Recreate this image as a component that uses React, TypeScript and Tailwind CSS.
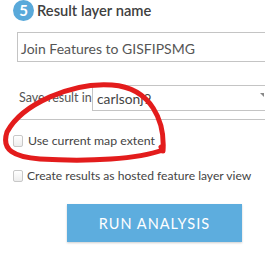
import React from 'react';

const font = { fontFamily: 'Lato, "Open Sans", sans-serif' };

function Checkbox() {
  return (
    <span className="inline-block w-[10px] h-[12px] rounded-[2px] border border-[#c8c8c8] bg-gradient-to-b from-white to-[#ededed] shrink-0" />
  );
}

export default function App() {
  return (
    <div className="relative w-[265px] h-[268px] bg-white overflow-hidden text-[#4c4c4c] whitespace-nowrap" style={font}>
      {/* Step header */}
      <div className="flex items-center h-[22px] mt-[-1px] pl-[13px]">
        <span className="flex items-center justify-center w-[21px] h-[21px] rounded-full bg-[#59a9da] text-white text-[15px] font-bold leading-none">
          5
        </span>
        <span className="ml-[3px] text-[14.7px] font-semibold text-[#404040] leading-none">Result layer name</span>
      </div>

      {/* Layer name input */}
      <div className="ml-[17px] mt-[11px] w-[260px] h-[30px] border border-[#c4c4c4] flex items-center pl-[3px] pt-[3px] text-[14px] text-[#555]">
        Join Features to GISFIPSMG
      </div>

      {/* Save result in */}
      <div className="flex items-center mt-[23px] h-[26px]">
        <span className="ml-[19px] text-[12.5px] text-[#555] w-[73px] shrink-0">Save result in</span>
        <div className="relative flex-1 h-[26px] border border-[#c4c4c4] border-r-0 flex items-center pl-[4px] pt-[2px] text-[13.8px] text-[#444]">
          carlsonj9
          <span className="absolute right-[1px] top-[7px] w-0 h-0 border-l-[4px] border-l-transparent border-t-[4px] border-t-[#888]" />
        </div>
      </div>
      <div className="ml-[17px] mt-[8px] h-px bg-[#c4c4c4]" />

      {/* Options */}
      <div className="flex items-center gap-[5px] ml-[13px] mt-[15px]">
        <Checkbox />
        <span className="text-[12.3px] text-[#444] leading-none">Use current map extent</span>
      </div>
      <div className="flex items-center gap-[4px] ml-[13px] mt-[23px]">
        <Checkbox />
        <span className="text-[12.1px] text-[#444] leading-none">Create results as hosted feature layer view</span>
      </div>

      {/* Run button */}
      <div className="ml-[67px] mt-[22px] w-[175px] h-[38px] bg-[#5dadde] shadow-[0_1px_2px_rgba(0,0,0,0.2)] flex items-center justify-center text-white text-[14.5px] tracking-[1px]">
        RUN ANALYSIS
      </div>

      {/* Hand-drawn red annotation */}
      <svg className="absolute left-0 top-0 pointer-events-none" width="265" height="268" viewBox="0 0 265 268">
        <path
          d="M163 151 C165 122 152 88 112 85 C72 82 22 104 7 132 C1 150 14 157 40 159 C90 162 138 159 163 150 L161 147"
          fill="none"
          stroke="#e31c1c"
          strokeWidth="5"
          strokeLinecap="round"
          strokeLinejoin="round"
        />
      </svg>
    </div>
  );
}
